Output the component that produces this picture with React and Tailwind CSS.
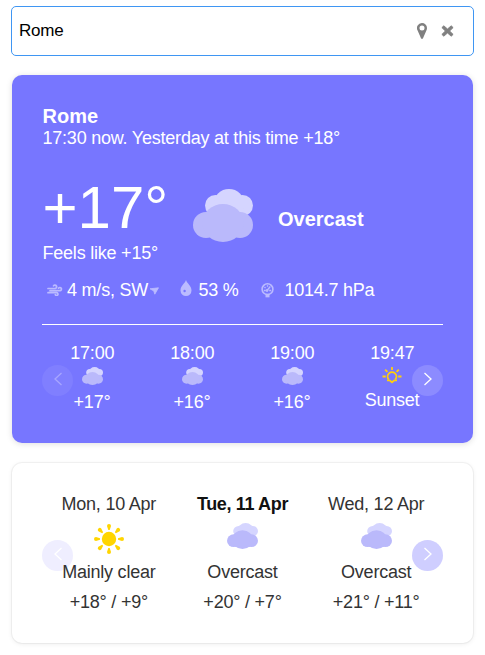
const LIGHT = { back: '#d5d5ff', front: '#bab9fb' };

function Cloud({ className }) {
  return (
    <svg viewBox="0 0 60 53" preserveAspectRatio="none" className={className}>
      <g fill={LIGHT.back}>
        <circle cx="22.5" cy="16.5" r="10.5" />
        <circle cx="49.5" cy="16.5" r="10.5" />
        <ellipse cx="36" cy="15" rx="15.5" ry="15" />
      </g>
      <g fill={LIGHT.front}>
        <circle cx="13" cy="36" r="13" />
        <circle cx="47" cy="36" r="13" />
        <ellipse cx="30" cy="34" rx="20.5" ry="19" />
      </g>
    </svg>
  );
}

function Sun() {
  return (
    <svg viewBox="0 0 30 30" className="h-[30px] w-[30px]" fill="#ffd500">
      <circle cx="15" cy="15" r="7.2" />
      {[0, 45, 90, 135, 180, 225, 270, 315].map((a) => (
        <path key={a} d="M13 2a2 2 0 0 1 4 0L15.700 6h-1.400Z" transform={`rotate(${a} 15 15)`} />
      ))}
    </svg>
  );
}

function Sunset() {
  return (
    <svg viewBox="0 0 20 17" className="-ml-px h-[17px] w-5" fill="none" stroke="#ffcf0d" strokeWidth="1.8">
      <path d="M10 0v3M3.200 2.700l2.200 2.200M16.800 2.700l-2.200 2.200M.5 9.500h3.300M16.200 9.500h3.300" />
      <path d="M6.700 12.500a4.400 4.400 0 1 1 6.600 0" />
      <path d="M5 13.300h2.600L10 15.300l2.400-2h2.600" />
    </svg>
  );
}

function Arrow({ dir, className }) {
  return (
    <button className={`absolute flex h-[31px] w-[31px] items-center justify-center rounded-full ${className}`}>
      <svg viewBox="0 0 10 14" className="mb-[3px] h-[14px] w-[10px]" fill="none" stroke="currentColor" strokeWidth="1.3">
        <path d={dir === 'left' ? 'M8.500 1 2 7l6.500 6' : 'M1.500 1 8 7l-6.500 6'} />
      </svg>
    </button>
  );
}

const hours = [
  { time: '17:00', text: '+17°' },
  { time: '18:00', text: '+16°' },
  { time: '19:00', text: '+16°' },
  { time: '19:47', text: 'Sunset', sunset: true },
];

const days = [
  { date: 'Mon, 10 Apr', text: 'Mainly clear', temp: '+18° / +9°', sun: true },
  { date: 'Tue, 11 Apr', text: 'Overcast', temp: '+20° / +7°', bold: true },
  { date: 'Wed, 12 Apr', text: 'Overcast', temp: '+21° / +11°' },
];

export default function App() {
  return (
    <div className="h-[655px] w-[485px] overflow-hidden bg-white pt-[6px] pl-[11px] font-['Liberation_Sans',Arial,sans-serif] text-[18px] leading-5 tracking-[-0.22px] whitespace-nowrap">
      <div className="flex h-[50px] w-[463px] items-center rounded-[5px] border border-[#3f96f3] pr-[19px] pl-[7px] text-[17px] text-black">
        <span className="flex-1">Rome</span>
        <svg viewBox="0 0 10 16" className="mr-[14px] h-4 w-[10px]" fill="#808080">
          <path fillRule="evenodd" d="M5 0a5 5 0 0 1 5 5c0 1-.2 1.700-.6 2.500L6 15.200q-1 1.600-2 0L.6 7.500A5 5 0 0 1 5 0Zm0 2.500a2.500 2.500 0 1 0 0 5 2.500 2.500 0 0 0 0-5Z" />
        </svg>
        <svg viewBox="0 0 12 12" className="h-3 w-[13px]" preserveAspectRatio="none" fill="#808080" stroke="#808080" strokeWidth="0.8" strokeLinejoin="round">
          <path d="M.8 2.600 2.600 .8 6 4 9.400 .8 11.200 2.600 8 6l3.200 3.400-1.800 1.800L6 8l-3.400 3.200L.8 9.400 4 6Z" />
        </svg>
      </div>

      <section className="mt-[19px] ml-px h-[368px] w-[461px] rounded-[10px] bg-[#7776ff] pt-[30px] pl-[30px] text-white shadow-[0_1px_6px_rgba(0,0,0,0.13)]">
        <h1 className="mb-px pl-[0.5px] text-[20px] leading-[22px] font-bold tracking-normal">Rome</h1>
        <p className="pl-[0.5px]">17:30 now. Yesterday at this time +18°</p>
        <div className="mt-[30px] flex h-[85px]">
          <div className="w-[151px]">
            <div className="pl-[0.5px] text-[60px] leading-[60px] tracking-normal">+17°</div>
            <div className="mt-[5px] pl-[0.5px]">Feels like +15°</div>
          </div>
          <Cloud className="mt-[11px] h-[53px] w-[60px]" />
          <div className="mt-[30px] ml-[25px] text-[20px] leading-[22px] font-bold tracking-normal">Overcast</div>
        </div>
        <div className="mt-[17px] flex h-5">
          <svg viewBox="0 0 16 12" className="mt-[4px] ml-[5px] h-3 w-4" fill="none" stroke="#bbbbff" strokeWidth="1.7" strokeLinecap="round">
            <path d="M1 4.500h7a1.700 1.700 0 1 0-1.500-2.600M3 6.700h10a1.600 1.600 0 1 0-1.500-2.500M1 8.700h8.500a1.400 1.400 0 1 1-1.200 2" />
          </svg>
          <span className="ml-[4px] w-[82px]">4 m/s, SW</span>
          <svg viewBox="0 0 9 8" className="mt-[7px] ml-px h-2 w-[9px]" fill="#bbbbff">
            <path d="M0 1.800 8.500 .8 4.800 7.200 3.800 4Z" stroke="#bbbbff" strokeWidth=".8" />
          </svg>
          <svg viewBox="0 0 12 16" className="mt-0 ml-[21px] h-4 w-3" fill="#bbbbff">
            <path d="M6 0c1 3.500 5.500 5.500 5.500 10.500a5.500 5.500 0 0 1-11 0C.5 5.500 5 3.500 6 0Z" />
            <circle cx="4.600" cy="11" r="1.200" fill="#7776ff" />
          </svg>
          <span className="ml-[6.500px] w-[62.500px]">53 %</span>
          <svg viewBox="0 0 13 15" className="mt-[3px] h-[15px] w-[13px]" fill="none" stroke="#bbbbff">
            <circle cx="6.500" cy="6.200" r="5.400" strokeWidth="1.600" />
            <path d="M2.800 7.500h2M3.500 4l1 1M6.500 2.200v1.500M8.200 7.500h2M6 7.500l3.300-4" strokeWidth="1.300" />
            <circle cx="6" cy="7.500" r="1" fill="#bbbbff" />
            <path d="M4.500 12.600h4" strokeWidth="3.500" />
          </svg>
          <span className="ml-[10.5px]">1014.7 hPa</span>
        </div>
        <div className="relative mt-6 w-[401px] border-t border-white pt-[18px]">
          <div className="grid w-[400px] grid-cols-4">
            {hours.map((h) => (
              <div key={h.time} className="flex flex-col items-center">
                <span className="pl-[0.5px]">{h.time}</span>
                <div className="mt-1 h-[18px]">
                  {h.sunset ? <Sunset /> : <Cloud className="h-[18px] w-[21px]" />}
                </div>
                <span className={h.sunset ? 'mt-[5px]' : 'mt-[7px]'}>{h.text}</span>
              </div>
            ))}
          </div>
          <Arrow dir="left" className="top-10 left-0 bg-[#807fff] text-[#a7a6ff]" />
          <Arrow dir="right" className="top-10 right-0 bg-[#8c8bff] text-white" />
        </div>
      </section>

      <section className="mt-5 ml-px h-[180px] w-[461px] rounded-[10px] bg-white pt-[31px] pl-[30px] text-[#333] shadow-[0_0_0_1px_rgba(0,0,0,0.04),0_1px_5px_rgba(0,0,0,0.08)]">
        <div className="relative w-[401px]">
          <Arrow dir="left" className="top-[46px] left-0 bg-[#efeeff] text-white" />
          <Arrow dir="right" className="top-[46px] right-0 bg-[#cfceff] text-white" />
          <div className="pointer-events-none relative grid grid-cols-3">
            {days.map((d) => (
              <div key={d.date} className="flex flex-col items-center">
                <span className={d.bold ? 'font-bold tracking-[-0.35px] text-[#111]' : ''}>{d.date}</span>
                <div className="mt-[10px] flex h-[30px]">
                  {d.sun ? <Sun /> : <Cloud className="-mt-px h-[26px] w-[31px]" />}
                </div>
                <span className="mt-2">{d.text}</span>
                <span className="mt-[10px]">{d.temp}</span>
              </div>
            ))}
          </div>
        </div>
      </section>
    </div>
  );
}
